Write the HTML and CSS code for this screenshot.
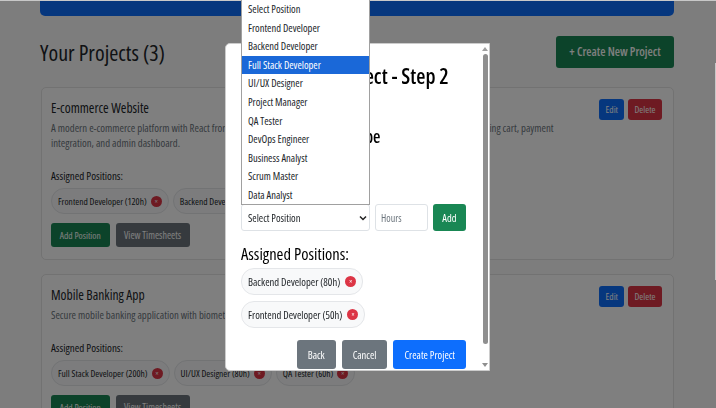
FILE: index.html
```html
<!DOCTYPE html>
<html lang="en">
<head>
<meta charset="utf-8">
<title>Projects</title>
<link rel="stylesheet" href="styles.css">
</head>
<body>
<div class="page">
  <div class="hero"></div>
  <div class="head">
    <h2>Your Projects (3)</h2>
    <button class="btn big green">+ Create New Project</button>
  </div>
  <section class="card first">
    <div class="card-top">
      <div class="card-text">
        <h3>E-commerce Website</h3>
        <p>A modern e-commerce platform with React frontend and Node.js backend, featuring product catalog, user login, shopping cart, payment<br>integration, and admin dashboard.</p>
      </div>
      <div class="actions"><button class="btn sm blue">Edit</button><button class="btn sm red">Delete</button></div>
    </div>
    <h4>Assigned Positions:</h4>
    <div class="chips">
      <span class="chip">Frontend Developer (120h)<i class="x">×</i></span>
      <span class="chip">Backend Developer (100h)<i class="x">×</i></span>
    </div>
    <div class="row"><button class="btn md green">Add Position</button><button class="btn md gray">View Timesheets</button></div>
  </section>
  <section class="card">
    <div class="card-top">
      <div class="card-text">
        <h3>Mobile Banking App</h3>
        <p>Secure mobile banking application with biometric authentication.</p>
      </div>
      <div class="actions"><button class="btn sm blue">Edit</button><button class="btn sm red">Delete</button></div>
    </div>
    <h4>Assigned Positions:</h4>
    <div class="chips">
      <span class="chip">Full Stack Developer (200h)<i class="x">×</i></span>
      <span class="chip">UI/UX Designer (80h)<i class="x">×</i></span>
      <span class="chip">QA Tester (60h)<i class="x">×</i></span>
    </div>
    <div class="row"><button class="btn md green">Add Position</button><button class="btn md gray">View Timesheets</button></div>
  </section>
</div>

<div class="overlay">
  <span class="edge"></span>
  <div class="modal">
    <div class="modal-body">
      <h2 class="modal-title">Create New Project - Step 2</h2>
      <h3 class="modal-sub">Choose New Role Type</h3>
      <div class="form-row">
        <div class="select">Select Position<svg class="caret" width="8" height="6" viewBox="0 0 8 6"><path d="M1 1.5l3 3 3-3" fill="none" stroke="#222" stroke-width="1.5"/></svg></div>
        <div class="hours">Hours</div>
        <button class="btn add">Add</button>
      </div>
      <h3 class="assigned">Assigned Positions:</h3>
      <div class="mchips">
        <span class="chip lg">Backend Developer (80h)<i class="x">×</i></span>
        <span class="chip lg">Frontend Developer (50h)<i class="x">×</i></span>
      </div>
      <div class="footer">
        <button class="btn foot slate">Back</button>
        <button class="btn foot slate">Cancel</button>
        <button class="btn foot primary">Create Project</button>
      </div>
    </div>
    <div class="scrollbar">
      <span class="arrow up"></span>
      <span class="thumb"></span>
      <span class="arrow down"></span>
    </div>
  </div>
</div>

<ul class="dropdown">
  <li>Select Position</li>
  <li>Frontend Developer</li>
  <li>Backend Developer</li>
  <li class="active">Full Stack Developer</li>
  <li>UI/UX Designer</li>
  <li>Project Manager</li>
  <li>QA Tester</li>
  <li>DevOps Engineer</li>
  <li>Business Analyst</li>
  <li>Scrum Master</li>
  <li>Data Analyst</li>
</ul>
</body>
</html>
```
FILE: styles.css
```css
* { box-sizing: border-box; }
html, body { margin: 0; height: 100%; overflow: hidden; }
body { background: #fafafa; font-family: "Open Sans", "Noto Sans", sans-serif; font-stretch: 85%; color: #212529; }
button { font-family: inherit; font-stretch: inherit; border: 0; padding: 0; color: #fff; }
h2, h3, h4, p { margin: 0; }

.page { padding: 1px 42px 0 40px; }
.hero { height: 15px; background: #0d6efd; border-radius: 0 0 5px 5px; }
.head { display: flex; justify-content: space-between; align-items: center; margin-top: 19px; height: 33px; }
.head h2 { font-size: 22px; font-weight: 500; }

.btn { border-radius: 3px; display: inline-flex; align-items: center; justify-content: center; }
.big { width: 118px; height: 32px; font-size: 12px; font-weight: 600; }
.green { background: #198754; }
.blue { background: #0d6efd; }
.red { background: #dc3545; }
.gray { background: #6c757d; }
.sm { height: 21px; font-size: 9.5px; padding: 0 6px; }
.sm.red { padding: 0 6.5px; }
.md { height: 24px; font-size: 9.5px; padding: 0 8.75px; }
.md.gray { font-size: 10px; padding: 0 8.5px; }

.card { margin: 19px 0 0 1px; background: #fff; border: 1px solid #e4e4e4; border-radius: 5px; padding: 12px 10px 13px 9px; height: 173px; }
.card.first { margin-bottom: 14px; }
.card + .card { margin-top: 14px; height: 200px; }
.card-top { display: flex; justify-content: space-between; align-items: flex-start; }
.card-text { flex: 1; }
.card h3 { font-size: 13.5px; font-weight: 500; line-height: 16px; }
.card p { font-size: 10.75px; color: #6c757d; line-height: 15px; margin-top: 5px; }
.actions { display: flex; gap: 4px; padding-right: 1px; margin-top: -1px; }
.card h4 { font-size: 11px; font-weight: 500; line-height: 14px; margin-top: 18px; }
.chips { display: flex; gap: 4px; margin-top: 5px; }
.chip { display: inline-flex; align-items: center; background: #f8f9fa; border: 1px solid #e4e6e9; border-radius: 13px; height: 26px; padding: 0 6px; font-size: 9.5px; font-style: normal; white-space: nowrap; gap: 4px; }
.x { width: 11px; height: 11px; border-radius: 50%; background: #dc3545; color: #fff; font-size: 7px; line-height: 11px; text-align: center; font-style: normal; }
.row { display: flex; gap: 6px; margin-top: 9px; }

.overlay { position: fixed; inset: 0; background: rgba(0,0,0,.5); border-top: 1px solid #c8c8c8; }
.edge { position: absolute; right: 0; top: 62px; width: 1px; height: 217px; background: #c8c8c8; }
.modal { position: absolute; left: 225px; top: 42px; width: 265px; height: 328px; background: #fff; border: 1px solid #ccc; border-radius: 5px 0 0 5px; display: flex; overflow: hidden; }
.modal-body { flex: 1; min-width: 0; padding: 19px 16px 0 15px; }
.modal-title { font-size: 21px; font-weight: 600; line-height: 26px; white-space: nowrap; color: #000; }
.modal-sub { font-size: 17px; font-weight: 600; line-height: 22px; margin-top: 37px; color: #000; white-space: nowrap; }
.form-row { display: flex; gap: 5px; margin-top: 56px; }
.select { width: 129px; height: 27px; border: 1px solid #dee2e6; border-radius: 3px; font-size: 10.5px; display: flex; align-items: center; justify-content: space-between; padding: 0 2px 0 6px; background: #fff; }
.hours { width: 53px; height: 27px; border: 1px solid #dee2e6; border-radius: 3px; font-size: 10px; color: #6c757d; display: flex; align-items: center; padding: 0 5px; }
.add { width: 33px; height: 27px; background: #198754; font-size: 10.5px; }
.assigned { font-size: 16.5px; font-weight: 500; line-height: 20px; margin-top: 13px; color: #000; }
.mchips { display: flex; flex-direction: column; align-items: flex-start; gap: 6px; margin-top: 4px; }
.chip.lg { height: 27px; font-size: 10.6px; gap: 5px; }
.footer { display: flex; justify-content: flex-end; gap: 6px; margin-top: 12px; }
.foot { height: 29px; font-size: 10.5px; padding: 0 11px; }
.slate { background: #6c757d; }
.primary { background: #0d6efd; }

.scrollbar { width: 6px; margin-right: 1px; display: flex; flex-direction: column; align-items: center; background: #fff; }
.thumb { height: 290px; width: 5px; background: #8f8f8f; border-radius: 3px; margin-top: 3px; }
.arrow { width: 0; height: 0; border-left: 3px solid transparent; border-right: 3px solid transparent; }
.arrow.up { border-bottom: 4px solid #a0a0a0; margin-top: 3px; }
.arrow.down { border-top: 4px solid #8f8f8f; margin: auto 0 3px; }

.dropdown { position: fixed; left: 241px; top: 0; width: 129px; height: 205px; margin: 0; padding: 0; list-style: none; background: #fff; border: 1px solid #a0a0a0; border-top: 0; font-size: 10.5px; color: #212529; }
.dropdown li { height: 18.6px; line-height: 18.6px; padding-left: 6px; }
.dropdown .active { background: #1a68d8; color: #fff; }
```
